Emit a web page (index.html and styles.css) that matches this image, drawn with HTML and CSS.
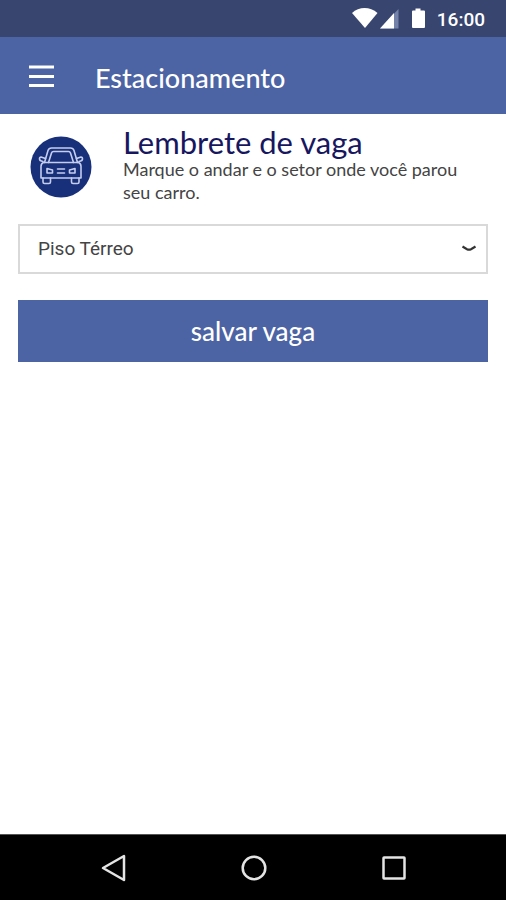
FILE: index.html
```html
<!DOCTYPE html>
<html lang="pt-BR">
<head>
<meta charset="utf-8">
<meta name="viewport" content="width=device-width, initial-scale=1">
<title>Estacionamento</title>
<link rel="stylesheet" href="styles.css">
</head>
<body>
<div class="status-bar">
  <svg class="status-icons" width="76" height="24" viewBox="0 0 76 24" aria-hidden="true">
    <path d="M0 6C7-.8 18-.8 25.500 6L13 21Z" fill="#fff"/>
    <path d="M46.500 2v19.500H28Z" fill="#7481a8"/>
    <path d="M42 6v15.500H28Z" fill="#fff"/>
    <path d="M63.500 1.500h5v2H72q1 0 1 1V20q0 1-1 1H61q-1 0-1-1V4.500q0-1 1-1h2.500Z" fill="#fff"/>
  </svg>
  <time class="clock">16:00</time>
</div>
<header class="app-bar">
  <button class="menu-button" type="button" aria-label="Menu">
    <svg width="26" height="24" viewBox="0 0 26 24" aria-hidden="true">
      <path d="M1 3h25M1 12.500h25M1 21.500h25" stroke="#fff" stroke-width="3"/>
    </svg>
  </button>
  <h1 class="app-title">Estacionamento</h1>
</header>
<main class="content">
  <section class="reminder">
    <svg class="car-icon" width="62" height="62" viewBox="0 0 62 62" aria-hidden="true">
      <circle cx="31" cy="31" r="30.500" fill="#182f7a"/>
      <g fill="none" stroke="#c5cdee" stroke-width="1.600" stroke-linejoin="round" stroke-linecap="round">
        <path d="M14.500 26.500 18 14.500q.8-2.500 3.500-2.500h19q2.700 0 3.500 2.500l3.500 12"/>
        <path d="M18.500 26.500 21.500 17q.5-1.500 2-1.500h15q1.500 0 2 1.500l3 9.500"/>
        <path d="M15.500 22.500l-4.500-1.500q-1.500 0-1.500 2t3.500 2.500M46.500 22.500l4.500-1.500q1.500 0 1.500 2t-3.500 2.500"/>
        <path d="M13.500 26.500h35q2.500 1 2.500 4V42H11V30.500q0-3 2.500-4Z"/>
        <path d="M13 42v4q0 1.500 1.500 1.500H19q1.500 0 1.500-1.500v-4M41.500 42v4q0 1.500 1.500 1.500h4.500q1.500 0 1.500-1.500v-4"/>
        <path d="M17 32.500l5.500 1.500v3H17ZM45 32.500l-5.500 1.500v3H45ZM27.500 33h7M27.500 37h7"/>
      </g>
    </svg>
    <div class="reminder-text">
      <h2 class="reminder-title">Lembrete de vaga</h2>
      <p class="reminder-copy">Marque o andar e o setor onde você parou seu carro.</p>
    </div>
  </section>
  <form class="spot-form">
    <div class="select-box">
      <select class="floor-select" aria-label="Piso">
        <option>Piso Térreo</option>
      </select>
      <svg class="chevron" width="16" height="8" viewBox="0 0 16 8" aria-hidden="true">
        <path d="M1.500 1.500 6 4.200q2 1 4 0l4.500-2.700" fill="none" stroke="#333" stroke-width="2.200"/>
      </svg>
    </div>
    <button class="save-button" type="button">salvar vaga</button>
  </form>
</main>
<nav class="nav-bar" aria-label="Sistema">
  <button class="nav-button" type="button" aria-label="Voltar">
    <svg width="28" height="28" viewBox="0 0 28 28" aria-hidden="true"><path d="M24 2v24L3 14Z"/></svg>
  </button>
  <button class="nav-button" type="button" aria-label="Início">
    <svg width="28" height="28" viewBox="0 0 28 28" aria-hidden="true"><circle cx="14" cy="14" r="11.300"/></svg>
  </button>
  <button class="nav-button" type="button" aria-label="Recentes">
    <svg width="28" height="28" viewBox="0 0 28 28" aria-hidden="true"><rect x="3.500" y="3.500" width="21" height="21" rx=".5"/></svg>
  </button>
</nav>
</body>
</html>
```
FILE: styles.css
```css
* {
  box-sizing: border-box;
}

body {
  margin: 0;
  min-height: 100vh;
  display: flex;
  flex-direction: column;
  background: #fff;
  font-family: Lato, sans-serif;
}

button,
select {
  margin: 0;
  padding: 0;
  border: 0;
  border-radius: 0;
  background: none;
  font-family: inherit;
}

svg {
  display: block;
  flex: none;
}

.status-bar {
  display: flex;
  justify-content: flex-end;
  align-items: center;
  gap: 9px;
  height: 37px;
  padding: 0 21px;
  background: #38456f;
  color: #fff;
}

.clock {
  font: 500 19px/24px Roboto, sans-serif;
  padding-top: 2px;
}

.app-bar {
  display: flex;
  align-items: center;
  gap: 41px;
  height: 77px;
  padding: 0 28px;
  background: #4c63a4;
  color: #fff;
}

.app-title {
  margin: 0;
  padding-top: 4px;
  font-size: 27px;
  line-height: 32px;
  font-weight: 500;
}

.content {
  flex: 1;
  padding: 12px 18px;
}

.reminder {
  display: flex;
  align-items: flex-end;
  gap: 31px;
  padding: 0 12px;
}

.car-icon {
  margin-bottom: 6px;
}

.reminder-title {
  margin: 0;
  color: #17175f;
  font-size: 31px;
  line-height: 32px;
  font-weight: 400;
}

.reminder-copy {
  margin: 0;
  color: #444;
  font-size: 18px;
  line-height: 23px;
}

.spot-form {
  display: grid;
  gap: 26px;
  margin-top: 20px;
}

.select-box {
  display: grid;
  align-items: center;
  border: 2px solid #d9d9d9;
}

.floor-select,
.chevron {
  grid-area: 1 / 1;
}

.floor-select {
  width: 100%;
  height: 46px;
  padding: 0 18px;
  appearance: none;
  color: #444;
  font: 400 19px/24px Roboto, sans-serif;
}

.chevron {
  justify-self: end;
  margin-right: 9px;
  pointer-events: none;
}

.save-button {
  height: 62px;
  background: #4c63a4;
  color: #fff;
  font-size: 26px;
  line-height: 28px;
  font-weight: 500;
}

.nav-bar {
  display: grid;
  grid-template-columns: repeat(3, 1fr);
  height: 66px;
  padding: 0 42px 0 44px;
  border-top: 1px solid #555;
  background: #000;
}

.nav-button {
  display: grid;
  place-items: center;
}

.nav-button svg {
  fill: none;
  stroke: #e4e4e4;
  stroke-width: 2.500px;
  stroke-linejoin: round;
}
```
